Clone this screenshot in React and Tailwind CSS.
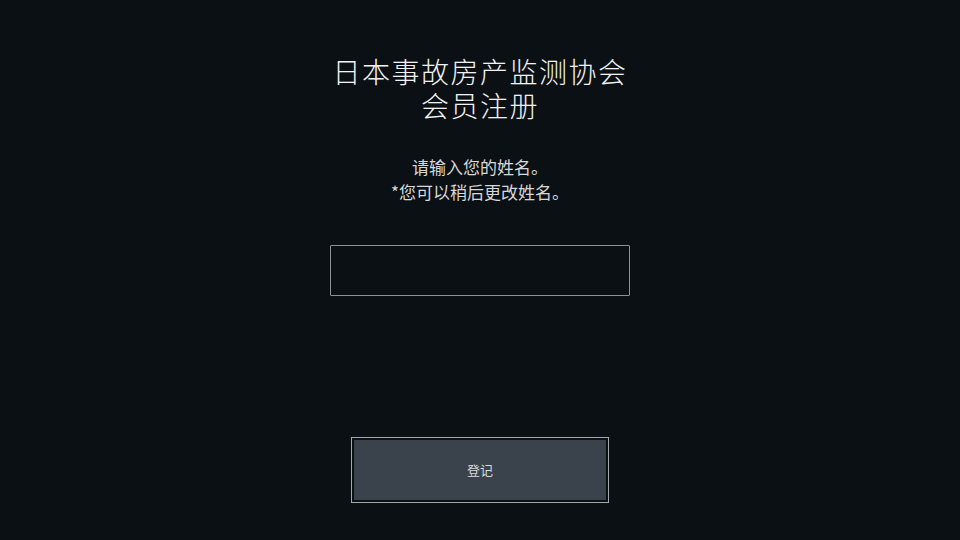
import React from "react";

const font = { fontFamily: '"Noto Sans CJK SC", "Noto Sans", sans-serif' };

const App = () => {
  return (
    <div
      className="w-[960px] h-[540px] bg-[#0b1015] text-white flex flex-col items-center overflow-hidden"
      style={font}
    >
      {/* Title */}
      <div className="mt-[54px] text-center text-[28px] leading-[34px] font-light text-[#f2f2f2] tracking-[1.5px]">
        <div>日本事故房产监测协会</div>
        <div>会员注册</div>
      </div>

      {/* Instructions */}
      <div className="mt-[32px] text-center text-[17px] leading-[25px] text-[#d6d8da]">
        <div>请输入您的姓名。</div>
        <div>*您可以稍后更改姓名。</div>
      </div>

      {/* Name input */}
      <input
        type="text"
        className="mt-[41px] w-[300px] h-[51px] bg-transparent border border-[#8d9196] rounded-[1px] outline-none px-3 text-white text-base"
      />

      {/* Register button */}
      <button className="mt-[141px] w-[258px] h-[66px] border border-[#a3a8ad] p-[2px] bg-[#0b1015]">
        <div className="w-full h-full bg-[#3a434b] flex items-center justify-center text-[13px] text-[#d9dcdf]">
          登记
        </div>
      </button>
    </div>
  );
};

export default App;
